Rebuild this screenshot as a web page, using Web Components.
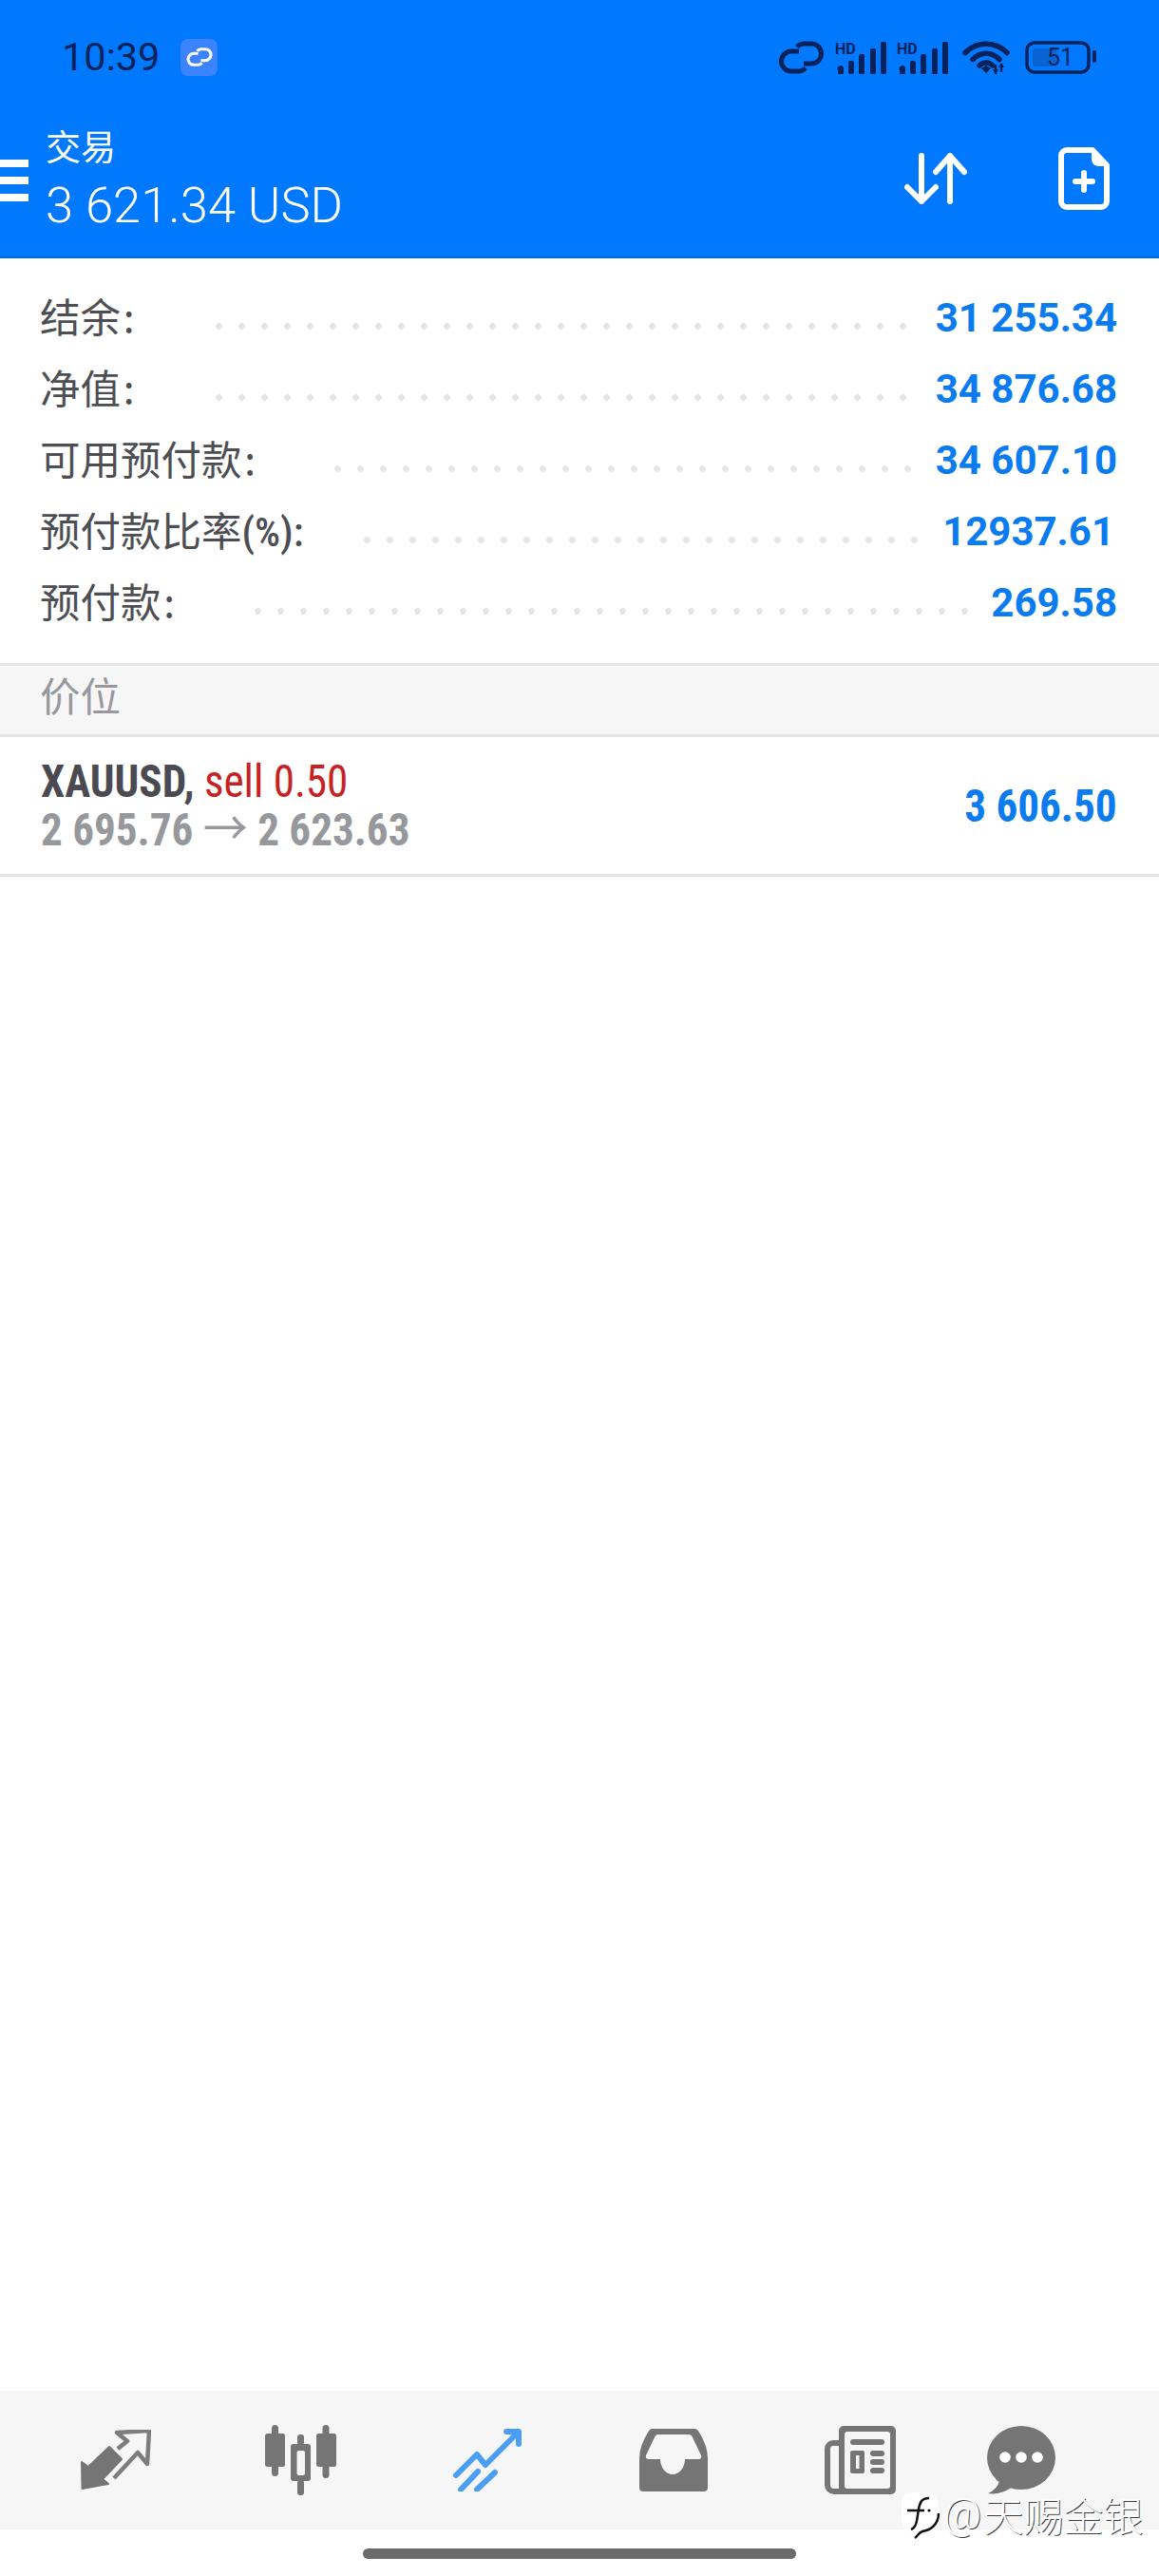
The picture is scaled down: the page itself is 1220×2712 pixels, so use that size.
<!DOCTYPE html>
<html lang="zh-CN"><head><meta charset="utf-8"><title>交易</title>
<style>
html,body{margin:0;padding:0;background:#fff}
body{font-family:Roboto,"Noto Sans CJK SC",sans-serif;width:1220px}
</style></head>
<body>
<mt-app>
  <mt-header slot="top"></mt-header>
  <account-row label="结余&#8202;:" value="31 255.34" dotx="227" dots="31"></account-row>
  <account-row label="净值&#8202;:" value="34 876.68" dotx="227" dots="31"></account-row>
  <account-row label="可用预付款&#8202;:" value="34 607.10" dotx="352" dots="26"></account-row>
  <account-row label="预付款比率<b>(%):</b>" value="12937.61" dotx="383" dots="25" inset="3"></account-row>
  <account-row label="预付款&#8202;:" value="269.58" dotx="268" dots="32"></account-row>
  <section-head>价位</section-head>
  <position-row symbol="XAUUSD," side="sell 0.50" from="2 695.76" to="2 623.63" value="3 606.50"></position-row>
  <bottom-nav slot="bottom"></bottom-nav>
  <home-bar slot="bottom"></home-bar>
  <water-mark slot="bottom"></water-mark>
</mt-app>
<script>
const reg=(name,html)=>customElements.define(name,class extends HTMLElement{
  connectedCallback(){
    if(this.shadowRoot)return;
    const s=this.attachShadow({mode:'open'});
    s.innerHTML=typeof html==='function'?html(this):html;
  }
});
const linkPath='<path d="M21 11H13a10.5 10.5 0 0 0 0 21h8a10 10 0 0 0 7-3.5"/><path d="M26 24h8a10.5 10.5 0 0 0 0-21h-8a10 10 0 0 0-7 3.5"/>';
const signal=`<svg width="54" height="35" viewBox="0 0 54 35" fill="#06225a"><text x="0" y="14" font-family="Roboto" font-weight="700" font-size="16">HD</text>
<path d="M3 35v-4a3 3 0 0 1 6-3v7z"/><rect x="14" y="21" width="6" height="14" rx="2"/><rect x="25" y="14" width="6" height="21" rx="1.5"/><rect x="37" y="8" width="6" height="27" rx="1.5"/><rect x="48" y="1" width="6" height="34" rx="1.5"/></svg>`;

reg('mt-app',`<style>
:host{display:flex;flex-direction:column;width:1220px;height:2712px;position:relative;overflow:hidden;background:#fff}
.main{flex:1;padding-top:24px;display:block}
</style><slot name="top"></slot><div class="main"><slot></slot></div><slot name="bottom"></slot>`);

reg('mt-header',`<style>
:host{display:block;background:#0079ff;border-bottom:2px solid #0068d6;color:#fff}
.status{height:120px;display:flex;align-items:center;padding:0 66px 0 65px;color:#06225a}
.time{font:400 41.500px/1 Roboto,sans-serif;width:103px;white-space:nowrap;font-stretch:95%}
.badge{width:39px;height:39px;margin-left:22px;border-radius:8px;background:#3b83ff;display:flex;align-items:center;justify-content:center}
.right{margin-left:auto;display:flex;align-items:center}
.right svg{display:block}
.s1{margin-left:12px}.s2{margin-left:11px}.w{margin-left:15px}.b{margin-left:16px}
.bar{height:150px;display:flex;align-items:flex-start}
.ham{width:30px;padding-top:48px;display:flex;flex-direction:column;gap:10px}
.ham i{display:block;height:8px;background:#fff}
.title{margin-left:18px;padding-top:13px}
.t1{font:400 37px/40px "Noto Sans CJK SC",sans-serif;display:block}
.t2{font:300 52.500px/60px Roboto,sans-serif;display:block;margin-top:13px;white-space:nowrap}
.acts{margin-left:auto;padding-right:52px;display:flex;align-items:flex-start}
.ud{margin-top:41px}.doc{margin-left:96px;margin-top:35px}
</style>
<div class="status"><span class="time">10:39</span>
<span class="badge"><svg width="28" height="20" viewBox="0 0 47 35" fill="none" stroke="#fff" stroke-width="5.500">${linkPath}</svg></span>
<div class="right">
<svg width="47" height="35" viewBox="0 0 47 35" fill="none" stroke="#06225a" stroke-width="5">${linkPath}</svg>
<span class="s1">${signal}</span><span class="s2">${signal}</span>
<svg class="w" width="50" height="37" viewBox="0 0 50 37" fill="none" stroke="#06225a" stroke-width="5.500" stroke-linecap="round"><path d="M3 13.500C15 1 35 1 47 13.500"/><path d="M11 20.500C19 12 31 12 39 20.500"/><path d="M18 27c4-4 10-4 14 0" /><path d="M20 30l5 5 5-5-5-3z" fill="#06225a" stroke="none"/><path d="M35 36V26M41 34V25" stroke-width="2.400" stroke-linecap="butt"/><path d="M32 31l3 5 3-5zM38 29l3-5 3 5z" fill="#06225a" stroke="none"/></svg>
<svg class="b" width="75" height="35" viewBox="0 0 75 35"><rect x="2" y="2" width="65" height="31" rx="8" fill="none" stroke="#06225a" stroke-width="3.500"/><rect x="8" y="8" width="25" height="19" rx="2" fill="#0a63d2"/><rect x="71" y="10" width="4" height="13" rx="2" fill="#06225a"/><text x="23" y="26" font-family="Roboto" font-size="25" fill="#06225a">51</text></svg>
</div></div>
<div class="bar"><div class="ham"><i></i><i></i><i></i></div>
<div class="title"><span class="t1">交易</span><span class="t2">3 621.34 USD</span></div>
<div class="acts">
<svg class="ud" width="66" height="54" viewBox="0 0 66 54" fill="none" stroke="#fff" stroke-width="6" stroke-linecap="round" stroke-linejoin="round"><path d="M18 3V51M3 36L18 51L33 36"/><path d="M48 51V3M33 20L48 3L63 20"/></svg>
<svg class="doc" width="54" height="66" viewBox="0 0 54 66" fill="none" stroke="#fff" stroke-width="6" stroke-linejoin="round"><path d="M9 3H36L51 19V57a6 6 0 0 1-6 6H9a6 6 0 0 1-6-6V9a6 6 0 0 1 6-6z"/><path d="M35 3L52 20H42a8 8 0 0 1-7-7z" fill="#fff" stroke="none"/><path d="M27 27V45M18 36H36" stroke-linecap="round"/></svg>
</div></div>`);

reg('account-row',el=>`<style>
:host{display:flex;align-items:center;height:75px;padding:0 44px 0 42px}
.l{font:400 42.500px/1 "Noto Sans CJK SC",sans-serif;color:#4d4e53;white-space:nowrap;flex:none;margin-top:-2px}
.l b{font:500 42.500px/0 Roboto,sans-serif;font-stretch:85%}
.d{height:7px;flex:none;margin-top:20px;background:radial-gradient(circle 3.5px at 3.5px 3.5px,#e6e6e6 92%,transparent 100%) 0 0/24px 7px repeat-x}
.v{margin-left:auto;font:700 42px/1 Roboto,sans-serif;color:#0a7cf0;white-space:nowrap;font-stretch:88%;margin-top:3px}
</style><span class="l" style="width:${el.getAttribute('dotx')-42}px">${el.getAttribute('label')}</span>
<span class="d" style="width:${el.getAttribute('dots')*24-17}px"></span>
<span class="v" style="margin-right:${el.getAttribute('inset')||0}px">${el.getAttribute('value')}</span>`);

reg('section-head',`<style>
:host{display:block;margin-top:27px;border-top:3px solid #e4e4e4;padding-top:2px}
div{height:70px;background:#f6f6f6;border-bottom:3px solid #e4e4e4;padding-left:42px;font:400 42.500px/56px "Noto Sans CJK SC",sans-serif;color:#97989c}
</style><div><slot></slot></div>`);

reg('position-row',el=>`<style>
:host{display:flex;align-items:center;height:144px;border-bottom:3px solid #e4e4e4;padding:0 44px 0 43px;font-family:Roboto,sans-serif;font-stretch:75%}
.left{transform:scaleX(.94);transform-origin:0 50%}
.a{font-size:48px;line-height:51px;height:51px;white-space:nowrap}
.s{font-weight:700;color:#4a4a50}.r{font-weight:400;color:#c62224}
.p{font-weight:700;color:#97989c}
.ar{font:400 50px/0 "Noto Sans CJK SC",sans-serif}
.v{margin-left:auto;font-weight:700;font-size:48px;color:#0a7cf0;white-space:nowrap;transform:scaleX(.94);transform-origin:100% 50%}
</style><div class="left"><div class="a"><span class="s">${el.getAttribute('symbol')}</span> <span class="r">${el.getAttribute('side')}</span></div>
<div class="a p">${el.getAttribute('from')} <span class="ar">→</span> ${el.getAttribute('to')}</div></div><span class="v">${el.getAttribute('value')}</span>`);

reg('bottom-nav',`<style>
:host{display:flex;align-items:center;height:146px;background:#f6f6f6;padding-left:85px}
svg{display:block;flex:none}
</style>
<svg width="74" height="64" viewBox="0 0 74 64"><path d="M1.500 62L1 34L8 39L30 18L43 31L23 52L29 57Z" fill="#757575" stroke="#757575" stroke-width="2" stroke-linejoin="round"/><path d="M39 20L49 12L38 3L72 1L70 36L60 24L35 51" fill="none" stroke="#7d7d7d" stroke-width="4.500" stroke-linejoin="round"/></svg>
<svg style="margin-left:120px" width="75" height="74" viewBox="0 0 75 74" fill="#757575"><rect x="0" y="9" width="21" height="35" rx="2.500"/><rect x="7" y="0" width="7" height="54" rx="3.500"/><path fill-rule="evenodd" d="M30 20H45a3 3 0 0 1 3 3V56a3 3 0 0 1-3 3H30a3 3 0 0 1-3-3V23a3 3 0 0 1 3-3zM35.500 27a2 2 0 0 0-2 2V51a2 2 0 0 0 2 2H40a2 2 0 0 0 2-2V29a2 2 0 0 0-2-2z"/><rect x="34" y="10" width="7" height="11" rx="3"/><rect x="34" y="58" width="7" height="16" rx="3"/><rect x="54" y="9" width="21" height="35" rx="2.500"/><rect x="60.500" y="0" width="7" height="56" rx="3.500"/></svg>
<svg style="margin-left:123px" width="72" height="66" viewBox="0 0 72 66" fill="none" stroke="#4a9ff5" stroke-width="6" stroke-linecap="round" stroke-linejoin="round"><path d="M3 49L25 27L34 38L68 4"/><path d="M56 3H69V16"/><path d="M8 64L26 45" stroke-linecap="round"/><path d="M25 64L44 46"/></svg>
<svg style="margin-left:124px" width="72" height="66" viewBox="0 0 72 66"><path fill="#757575" fill-rule="evenodd" d="M14 0H58Q61 0 62.500 3Q72 18 72 31V62a4 4 0 0 1-4 4H4a4 4 0 0 1-4-4V31Q0 18 9.500 3Q11 0 14 0zM20 6Q17 6 16 9L7 28Q6 32 10 32H22C22 41 28 48 35 48S48 41 48 32H62Q66 32 65 28L56 9Q55 6 52 6z"/></svg>
<svg style="margin-left:123px" width="75" height="72" viewBox="0 0 75 72" fill="#757575"><path fill-rule="evenodd" d="M20 0H70a5 5 0 0 1 5 5V67a5 5 0 0 1-5 5H15V5a5 5 0 0 1 5-5zM24 6a3 3 0 0 0-3 3V63a3 3 0 0 0 3 3H66a3 3 0 0 0 3-3V9a3 3 0 0 0-3-3z"/><path fill="none" stroke="#757575" stroke-width="6" d="M15 18H9a6 6 0 0 0-6 6V62a7 7 0 0 0 7 7H16"/><rect x="27" y="14" width="36" height="6" rx="3"/><path fill-rule="evenodd" d="M29 26H40a2 2 0 0 1 2 2V48a2 2 0 0 1-2 2H29a2 2 0 0 1-2-2V28a2 2 0 0 1 2-2zM33 31V45H36.500V31z"/><rect x="48" y="26" width="15" height="6" rx="3"/><rect x="48" y="35" width="15" height="6" rx="3"/><rect x="48" y="44" width="15" height="6" rx="3"/></svg>
<svg style="margin-left:96px" width="72" height="72" viewBox="0 0 72 72"><ellipse cx="36" cy="33.500" rx="36" ry="33.500" fill="#757575"/><path d="M13 56C13 62 8 68 1 71C11 73 22 68 30 62Z" fill="#757575"/><circle cx="19" cy="33" r="5.800" fill="#fff"/><circle cx="36" cy="33" r="5.800" fill="#fff"/><circle cx="53" cy="33" r="5.800" fill="#fff"/></svg>`);

reg('home-bar',`<style>
:host{display:block;height:49px;padding-top:20px;box-sizing:border-box}
div{width:456px;height:11px;margin-left:382px;border-radius:6px;background:#6b6b6b}
</style><div></div>`);

reg('water-mark',`<style>
:host{position:absolute;left:948px;top:2622px;display:flex;align-items:center;height:50px;color:#fff;font:300 42px/50px "Noto Sans CJK SC",sans-serif;text-shadow:1px 1px 0 rgba(0,0,0,.75);white-space:nowrap}
svg{display:block;margin-right:3px}
.at{font-family:Roboto,sans-serif;font-weight:300;font-size:44px;margin-right:2px}
</style><svg width="42" height="52" viewBox="0 0 42 52"><path d="M13 3H28C37 3 40 9 40 18V30C40 38 34 44 26 44L15 44C5 44 1 38 1 30V15C1 7 5 3 13 3z" fill="#fff"/><path d="M30 9C22 9 20 14 19 21L17 33C16 38 14 41 11 42M7 22H25" fill="none" stroke="#111" stroke-width="2.500"/><path d="M40 25C40 38 30 43 23 44C19 45 18 49 15 51" fill="none" stroke="#111" stroke-width="2.500"/><circle cx="30" cy="22" r="1.600" fill="#111"/></svg><span class="at">@</span><span>天赐金银</span>`);
</script>
</body></html>
